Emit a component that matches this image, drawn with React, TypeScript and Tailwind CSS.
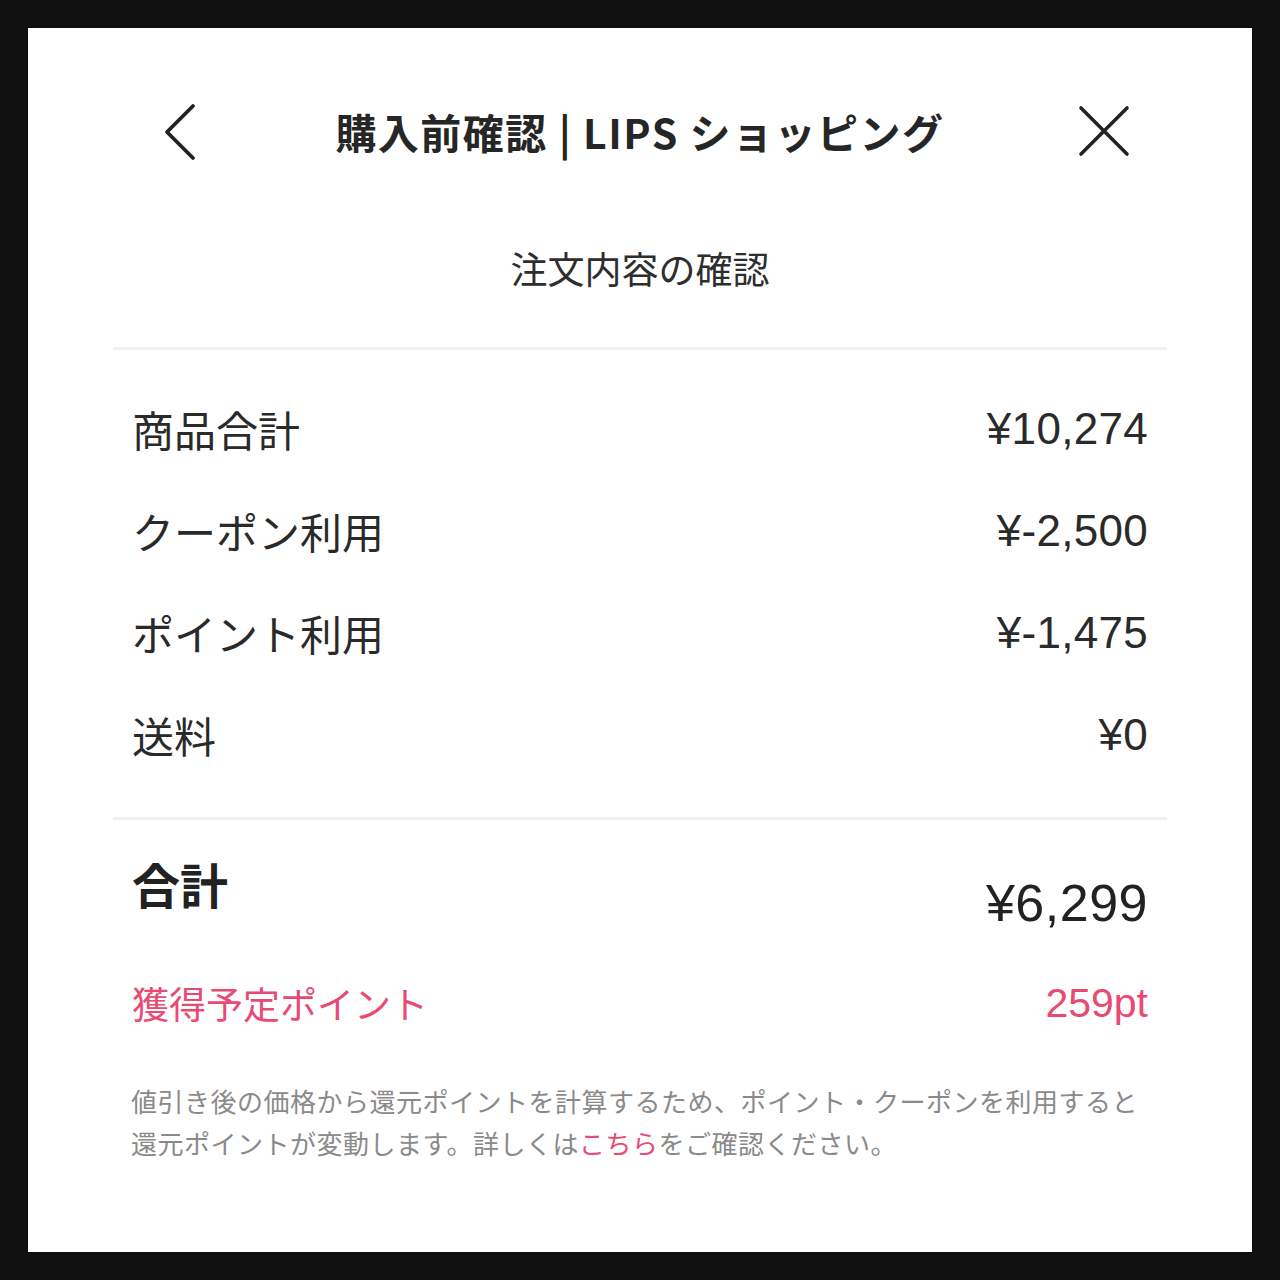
import React from "react";

const jp = { fontFamily: '"Noto Sans CJK JP", "Noto Sans", sans-serif' } as React.CSSProperties;
const num = { fontFamily: '"Liberation Sans", "Noto Sans CJK JP", sans-serif' } as React.CSSProperties;

function Row({ label, value }: { label: string; value: string }) {
  return (
    <div className="flex h-[102px] items-center justify-between px-[19px]">
      <span className="text-[42px] leading-none text-[#2a2a2a]" style={jp}>{label}</span>
      <span className="text-[44px] leading-none tracking-[0.3px] text-[#2a2a2a]" style={num}>{value}</span>
    </div>
  );
}

export default function App() {
  return (
    <div className="h-[1280px] w-[1280px] bg-[#111111] p-[28px]">
      <div className="flex h-full w-full flex-col bg-white shadow-[0_0_4px_rgba(0,0,0,0.3)]" style={jp}>
        {/* header */}
        <div className="flex h-[206px] items-center justify-between px-[132px]">
          <svg width="40" height="60" viewBox="0 0 40 60" className="ml-[2px]">
            <path d="M31 5 L5 31 L31 57" fill="none" stroke="#222" strokeWidth="3.8" strokeLinecap="round" strokeLinejoin="round" />
          </svg>
          <h1 className="text-[41px] font-bold leading-none tracking-[1.5px] text-[#262626]" style={jp}>
            購入前確認 | LIPS ショッピング
          </h1>
          <svg width="52" height="52" viewBox="0 0 52 52" className="mr-[-10px]">
            <path d="M3 3 L49 49 M49 3 L3 49" fill="none" stroke="#222" strokeWidth="3.6" strokeLinecap="round" />
          </svg>
        </div>

        <div className="flex h-[68px] items-center justify-center">
          <span className="text-[37px] leading-none text-[#2e2e2e]" style={jp}>注文内容の確認</span>
        </div>

        <div className="px-[85px]">
          <div className="mt-[45px] h-[3px] bg-[#f0f0f0]" />
          <div className="pt-[28px]">
            <Row label="商品合計" value="¥10,274" />
            <Row label="クーポン利用" value="¥-2,500" />
            <Row label="ポイント利用" value="¥-1,475" />
            <Row label="送料" value="¥0" />
          </div>
          <div className="mt-[31px] h-[3px] bg-[#f0f0f0]" />

          <div className="flex items-start justify-between px-[19px] pt-[38px]">
            <span className="text-[48px] font-bold leading-[50px] text-[#222]" style={jp}>合計</span>
            <span className="mt-[20px] text-[52px] leading-[50px] tracking-[0.5px] text-[#222]" style={num}>¥6,299</span>
          </div>

          <div className="mt-[45px] flex h-[60px] items-center justify-between px-[19px]">
            <span className="text-[37px] leading-none text-[#e94a72]" style={jp}>獲得予定ポイント</span>
            <span className="text-[41px] leading-none text-[#e94a72]" style={num}>259pt</span>
          </div>

          <p className="mt-[47px] px-[18px] text-[26px] leading-[42px] tracking-[0.5px] text-[#8a8a8a]" style={jp}>
            値引き後の価格から還元ポイントを計算するため、ポイント・クーポンを利用すると還元ポイントが変動します。詳しくは<span className="text-[#e94a72]">こちら</span>をご確認ください。
          </p>
        </div>
      </div>
    </div>
  );
}
